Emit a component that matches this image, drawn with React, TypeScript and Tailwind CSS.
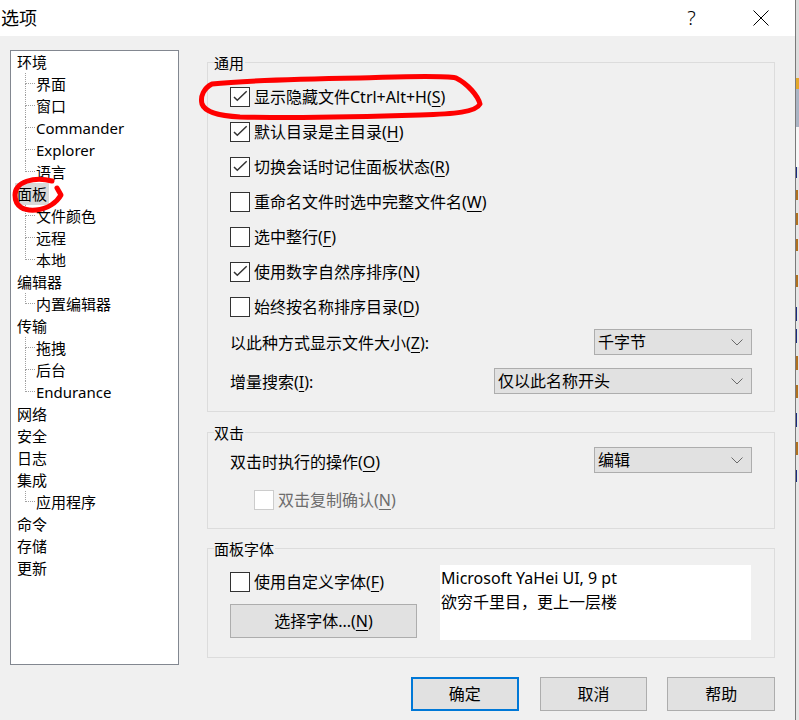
import React from "react";

// 复选框
const Check = ({ checked, disabled }: { checked?: boolean; disabled?: boolean }) => (
  <span
    className={`w-[20px] h-[20px] shrink-0 bg-white border flex items-center justify-center ${
      disabled ? "border-[#cccccc]" : "border-[#333333]"
    }`}
  >
    {checked && (
      <svg width="18" height="18" viewBox="0 0 18 18">
        <polyline points="3,9 6.3,12.3 15.7,3.3" fill="none" stroke="#333333" strokeWidth="1.5" />
      </svg>
    )}
  </span>
);

// 助记键 (X)
const Mn = ({ k }: { k: string }) => (
  <>
    (<u className="underline underline-offset-[3px] decoration-1">{k}</u>)
  </>
);

const CheckRow = ({ checked, text, k }: { checked?: boolean; text: string; k: string }) => (
  <div className="h-[35px] flex items-center">
    <Check checked={checked} />
    <span className="ml-[4px] text-[16px] leading-[22px]">
      {text}
      <Mn k={k} />
    </span>
  </div>
);

const Chevron = () => (
  <svg width="12" height="7" viewBox="0 0 12 7">
    <polyline points="0.5,0.5 6,6 11.5,0.5" fill="none" stroke="#6a6a6a" strokeWidth="1" />
  </svg>
);

const Dropdown = ({ value, wide }: { value: string; wide?: boolean }) => (
  <div
    className={`h-[26px] bg-[#e1e1e1] border border-[#adadad] flex items-center justify-between pl-[3px] pr-[8px] text-[16px] leading-[22px] ${
      wide ? "w-[258px]" : "w-[158px]"
    }`}
  >
    <span>{value}</span>
    <Chevron />
  </div>
);

const Legend = ({ text }: { text: string }) => (
  <div className="self-start ml-[6px] -mt-[11px] pr-[1px] h-[22px] leading-[22px] text-[15px] bg-[#f0f0f0]">
    {text}
  </div>
);

type Node = { label: string; children?: string[]; selected?: boolean };

const tree: Node[] = [
  { label: "环境", children: ["界面", "窗口", "Commander", "Explorer", "语言"] },
  { label: "面板", selected: true, children: ["文件颜色", "远程", "本地"] },
  { label: "编辑器", children: ["内置编辑器"] },
  { label: "传输", children: ["拖拽", "后台", "Endurance"] },
  { label: "网络" },
  { label: "安全" },
  { label: "日志" },
  { label: "集成", children: ["应用程序"] },
  { label: "命令" },
  { label: "存储" },
  { label: "更新" },
];

const TreeChild = ({ label, last }: { label: string; last: boolean }) => (
  <div className="h-[22px] flex">
    <div className="w-[19px] h-[22px] flex flex-col shrink-0">
      <div className="ml-[8px] w-[10px] h-[11px] border-l border-b border-dotted border-[#a0a0a0]" />
      {!last && <div className="ml-[8px] w-[10px] h-[11px] border-l border-dotted border-[#a0a0a0]" />}
    </div>
    <span className="leading-[22px]">{label}</span>
  </div>
);

const Button = ({ label, primary, className }: { label: React.ReactNode; primary?: boolean; className?: string }) => (
  <div
    className={`h-[34px] flex items-center justify-center bg-[#e1e1e1] text-[16px] ${
      primary ? "border-2 border-[#0078d7]" : "border border-[#adadad]"
    } ${className ?? ""}`}
  >
    {label}
  </div>
);

export default function App() {
  return (
    <div className="relative w-[799px] h-[720px] flex overflow-hidden text-black font-['Noto_Sans','Noto_Sans_CJK_SC',sans-serif]">
      {/* 对话框 */}
      <div className="w-[796px] h-full flex flex-col border-r border-[#7a7a7a]">
        {/* 标题栏 */}
        <div className="h-[36px] bg-white flex items-center shrink-0">
          <span className="pl-[1px] text-[18px] leading-[24px]">选项</span>
          <div className="flex-1" />
          <div className="w-[69px] h-[36px] flex items-center justify-center text-[20px] font-light leading-none">?</div>
          <div className="w-[69px] h-[36px] flex items-center justify-center">
            <svg width="16" height="16" viewBox="0 0 16 16">
              <path d="M0.5 0.5 L15.5 15.5 M15.5 0.5 L0.5 15.5" stroke="#000" strokeWidth="1" />
            </svg>
          </div>
        </div>

        {/* 主体 */}
        <div className="flex-1 bg-[#f0f0f0] flex">
          {/* 左侧树 */}
          <div className="ml-[10px] mt-[14px] w-[169px] h-[615px] bg-white border border-[#828790] pl-[6px] text-[15px] shrink-0">
            {tree.map((n) => (
              <div key={n.label}>
                <div className="h-[22px] flex items-center">
                  <span className={`leading-[22px] ${n.selected ? "bg-[#d9d9d9] -ml-[2px] px-[2px]" : ""}`}>{n.label}</span>
                </div>
                {n.children?.map((c, i) => (
                  <TreeChild key={c} label={c} last={i === n.children!.length - 1} />
                ))}
              </div>
            ))}
          </div>

          {/* 右侧 */}
          <div className="ml-[28px] mt-[26px] w-[568px] flex flex-col">
            {/* 通用 */}
            <div className="h-[350px] border border-[#dcdcdc] flex flex-col">
              <Legend text="通用" />
              <div className="mt-[5px] pl-[22px] pr-[22px] flex flex-col">
                <CheckRow checked text="显示隐藏文件Ctrl+Alt+H" k="S" />
                <CheckRow checked text="默认目录是主目录" k="H" />
                <CheckRow checked text="切换会话时记住面板状态" k="R" />
                <CheckRow text="重命名文件时选中完整文件名" k="W" />
                <CheckRow text="选中整行" k="F" />
                <CheckRow checked text="使用数字自然序排序" k="N" />
                <CheckRow text="始终按名称排序目录" k="D" />
                <div className="mt-[5px] h-[26px] flex items-center justify-between text-[16px]">
                  <span className="leading-[22px] mt-[2px]">
                    以此种方式显示文件大小
                    <Mn k="Z" />:
                  </span>
                  <Dropdown value="千字节" />
                </div>
                <div className="mt-[13px] h-[26px] flex items-center justify-between text-[16px]">
                  <span className="leading-[22px] mt-[2px]">
                    增量搜索
                    <Mn k="I" />:
                  </span>
                  <Dropdown value="仅以此名称开头" wide />
                </div>
              </div>
            </div>

            {/* 双击 */}
            <div className="mt-[20px] h-[97px] border border-[#dcdcdc] flex flex-col">
              <Legend text="双击" />
              <div className="mt-[3px] pl-[22px] pr-[22px] h-[26px] flex items-center justify-between text-[16px]">
                <span className="leading-[22px] mt-[4px]">
                  双击时执行的操作
                  <Mn k="O" />
                </span>
                <Dropdown value="编辑" />
              </div>
              <div className="mt-[17px] pl-[46px] h-[20px] flex items-center">
                <Check disabled />
                <span className="ml-[4px] text-[16px] leading-[22px] text-[#6d6d6d]">
                  双击复制确认
                  <Mn k="N" />
                </span>
              </div>
            </div>

            {/* 面板字体 */}
            <div className="mt-[19px] h-[110px] border border-[#dcdcdc] flex flex-col">
              <Legend text="面板字体" />
              <div className="pl-[22px] flex">
                <div className="w-[187px] flex flex-col">
                  <div className="mt-[12px] h-[20px] flex items-center">
                    <Check />
                    <span className="ml-[4px] text-[16px] leading-[22px]">
                      使用自定义字体
                      <Mn k="F" />
                    </span>
                  </div>
                  <Button
                    className="mt-[12px] w-[187px] border-[#adadad]"
                    label={
                      <span>
                        选择字体...
                        <Mn k="N" />
                      </span>
                    }
                  />
                </div>
                <div className="ml-[23px] mt-[5px] w-[311px] h-[75px] bg-white pt-[1px] pl-[1px] text-[16px] leading-[24px]">
                  <div>Microsoft YaHei UI, 9 pt</div>
                  <div>欲穷千里目，更上一层楼</div>
                </div>
              </div>
            </div>

            {/* 底部按钮 */}
            <div className="mt-[19px] flex">
              <Button primary label="确定" className="ml-[204px] w-[108px]" />
              <Button label="取消" className="ml-[21px] w-[108px]" />
              <Button label="帮助" className="ml-[20px] w-[108px]" />
            </div>
          </div>
        </div>
      </div>

      {/* 背后窗口露出的一条 */}
      <div className="w-[3px] h-full flex flex-col bg-[#e6e6e6]">
        <div className="h-[78px] bg-[#dcdcdc]" />
        <div className="h-[11px] bg-[#e3a82b]" />
        <div className="h-[38px] bg-[#aab4c4]" />
        <div className="h-[40px] bg-[#f7f7f7]" />
        <div className="h-[11px] w-[1px] bg-[#1a2a80]" />
        <div className="h-[12px]" />
        <div className="h-[10px] w-[2px] bg-[#b07020]" />
        <div className="h-[13px]" />
        <div className="h-[12px] w-[2px] bg-[#b07020]" />
        <div className="h-[14px]" />
        <div className="h-[12px] w-[2px] bg-[#b07020]" />
        <div className="h-[24px]" />
        <div className="h-[12px] w-[2px] bg-[#b07020]" />
        <div className="h-[20px]" />
        <div className="h-[14px] w-[1px] bg-[#1a2a80]" />
        <div className="h-[8px]" />
        <div className="h-[14px] w-[1px] bg-[#1a2a80]" />
        <div className="h-[13px]" />
        <div className="h-[14px] w-[2px] bg-[#b07020]" />
        <div className="h-[15px]" />
        <div className="h-[13px] w-[2px] bg-[#b07020]" />
        <div className="h-[15px]" />
        <div className="h-[14px] w-[1px] bg-[#1a2a80]" />
        <div className="h-[15px]" />
        <div className="h-[13px] w-[2px] bg-[#b07020]" />
        <div className="h-[15px]" />
        <div className="h-[12px] w-[1px] bg-[#1a2a80]" />
      </div>

      {/* 红色标注 */}
      <svg className="absolute inset-0 pointer-events-none" width="799" height="720" viewBox="0 0 799 720">
        <path
          d="M212 84 C240 81 300 79 360 78 C400 77 440 75 456 78 C468 84 478 96 480 104 C476 112 455 114 420 115 C360 117 290 118 240 117 C220 116 205 112 202 104 C200 96 204 88 212 84 Z"
          fill="none"
          stroke="#ff0000"
          strokeWidth="5"
          strokeLinejoin="round"
        />
        <path
          d="M52 181 C34 176 15 182 15 195 C15 207 24 211 36 210 C48 209 57 202 61 195 L57 188"
          fill="none"
          stroke="#ff0000"
          strokeWidth="5"
          strokeLinecap="round"
          strokeLinejoin="round"
        />
      </svg>
    </div>
  );
}
